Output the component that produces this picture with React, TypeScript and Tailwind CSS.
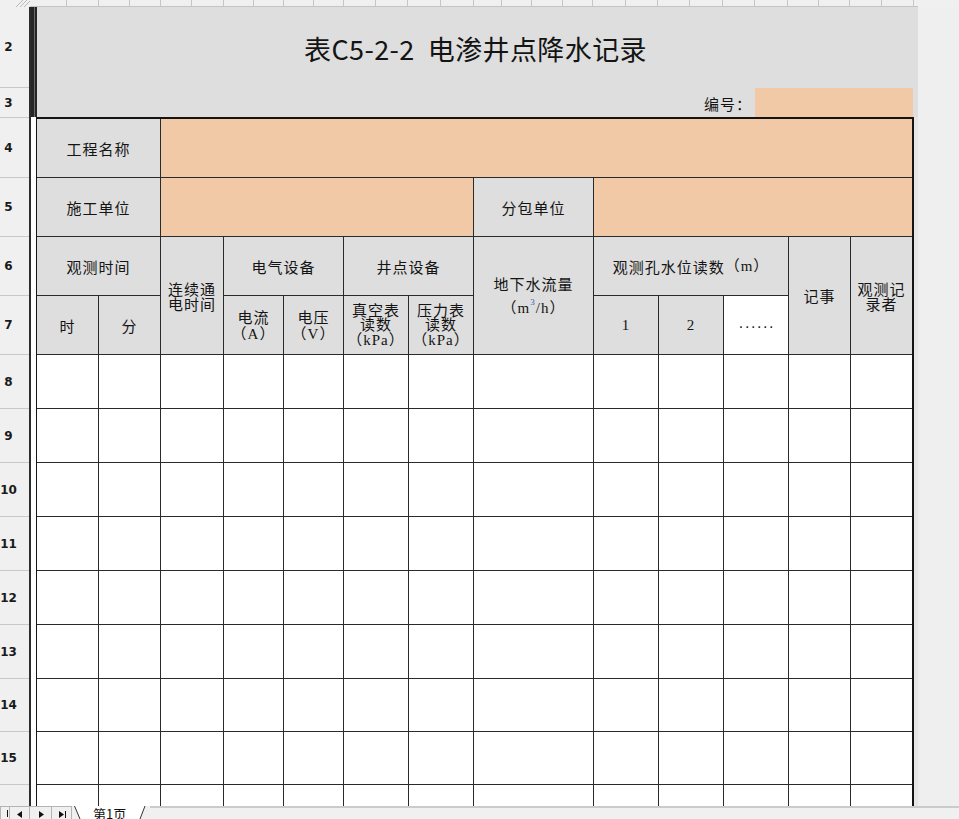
import React from "react";

const stripStops = [30, 67, 99, 130, 161, 192, 224, 254, 284, 314, 344, 376, 408, 441, 474, 502, 532, 563, 593, 626, 658, 690, 723, 755, 788, 819, 850, 882, 914, 918];

const rowHeads: { n: string; h: string }[] = [
  { n: "2", h: "h-[81px]" },
  { n: "3", h: "h-[30px]" },
  { n: "4", h: "h-[60px]" },
  { n: "5", h: "h-[59px]" },
  { n: "6", h: "h-[59px]" },
  { n: "7", h: "h-[59px]" },
  { n: "8", h: "h-[54px]" },
  { n: "9", h: "h-[54px]" },
  { n: "10", h: "h-[54px]" },
  { n: "11", h: "h-[54px]" },
  { n: "12", h: "h-[54px]" },
  { n: "13", h: "h-[54px]" },
  { n: "14", h: "h-[53px]" },
  { n: "15", h: "h-[53px]" },
  { n: "16", h: "h-[53px]" },
];

const G = "bg-[#dedede] flex items-center justify-center text-center text-[15px] leading-[15px] tracking-[1px] text-[#141414]";
const SERIF = "font-['Liberation_Serif','Noto_Sans_CJK_SC',serif]";

function Tri({ dir }: { dir: "l" | "r" }) {
  return (
    <svg width="6" height="7" viewBox="0 0 6 7">
      {dir === "l" ? <polygon points="5,0 5,7 0,3.5" fill="#111" /> : <polygon points="1,0 1,7 6,3.5" fill="#111" />}
    </svg>
  );
}

export default function App() {
  const dataRows = Array.from({ length: 9 });
  const cols = Array.from({ length: 13 });
  return (
    <div className="w-[959px] h-[819px] overflow-hidden bg-[#f0f0f0] flex flex-col font-['Noto_Sans_CJK_SC',sans-serif] text-[#141414]">
      {/* column header strip */}
      <div className="h-[7px] flex shrink-0">
        <div className="w-[30px] h-full bg-[#f0f0f0] flex justify-end">
          <svg width="16" height="7" viewBox="0 0 16 7">
            <line x1="2" y1="7" x2="9" y2="0" stroke="#b8b8b8" strokeWidth="1" />
            <line x1="6" y1="7" x2="13" y2="0" stroke="#b8b8b8" strokeWidth="1" />
            <line x1="10" y1="7" x2="16" y2="1" stroke="#b8b8b8" strokeWidth="1" />
          </svg>
        </div>
        <div className="flex h-full border-b border-[#c4c4c4]">
          {stripStops.slice(0, -1).map((s, i) => (
            <div
              key={i}
              className={i < stripStops.length - 2 ? "h-full bg-[#f0f0f0] border-r border-[#c6c6c6]" : "h-full bg-[#f0f0f0]"}
              style={{ width: stripStops[i + 1] - s }}
            />
          ))}
        </div>
      </div>

      {/* middle */}
      <div className="flex-1 flex min-h-0 overflow-hidden">
        {/* row headers */}
        <div className="w-[29px] shrink-0 flex flex-col bg-[#f0f0f0]">
          {rowHeads.map((r) => (
            <div key={r.n} className={`${r.h} shrink-0 border-b border-[#c8c8c8] flex items-center`}>
              <span className="w-[17px] text-center font-['DejaVu_Sans',sans-serif] font-bold text-[12px] text-[#1a1a1a]">{r.n}</span>
            </div>
          ))}
        </div>
        <div className="w-[2px] shrink-0 bg-[#2c2c2c]" />

        {/* sheet */}
        <div className="w-[887px] shrink-0 flex flex-col bg-white">
          {/* rows 2-3 */}
          <div className="h-[110px] shrink-0 flex">
            <div className="w-[6px] bg-[#262626] flex justify-center">
              <div className="w-px bg-[#6a6a6a]" />
            </div>
            <div className="flex-1 bg-[#dedede] flex flex-col">
              <div className="h-[81px] flex items-center justify-center pt-[2px] pr-[4px]">
                <span className="text-[27px] leading-none tracking-[0.4px] text-[#141414]">表C5-2-2</span>
                <span className="ml-[13px] text-[27px] leading-none tracking-[0.4px] text-[#141414]">电渗井点降水记录</span>
              </div>
              <div className="h-[29px] flex justify-end items-stretch pr-[5px]">
                <div className="flex items-center pr-[3px] pt-[3px] text-[15px] tracking-[1px]">编号：</div>
                <div className="w-[158px] bg-[#f2c9a6]" />
              </div>
            </div>
          </div>

          {/* table block */}
          <div className="flex-1 flex min-h-0">
            <div className="w-[5px] shrink-0 bg-white" />
            <div className="w-[878px] shrink-0 self-start border-l border-t-2 border-r-2 border-[#141414] bg-[#2a2a2a] grid gap-px grid-cols-[61px_61px_62px_59px_59px_64px_64px_119px_64px_64px_64px_61px_61px] grid-rows-[58px_58px_58px_58px_53px_53px_53px_53px_53px_53px_52px_52px_53px]">
              {/* row 4 */}
              <div className={`${G} col-span-2`}>工程名称</div>
              <div className="col-span-11 bg-[#f2c9a6]" />
              {/* row 5 */}
              <div className={`${G} col-span-2`}>施工单位</div>
              <div className="col-span-5 bg-[#f2c9a6]" />
              <div className={G}>分包单位</div>
              <div className="col-span-5 bg-[#f2c9a6]" />
              {/* row 6 */}
              <div className={`${G} col-span-2`}>观测时间</div>
              <div className={`${G} row-span-2`}>
                <div>连续通<br />电时间</div>
              </div>
              <div className={`${G} col-span-2`}>电气设备</div>
              <div className={`${G} col-span-2`}>井点设备</div>
              <div className={`${G} row-span-2`}>
                <div className="leading-[23px]">
                  地下水流量
                  <br />
                  <span className={`${SERIF} tracking-[1px]`}>
                    （m<span className="inline-block text-[9px] leading-none align-top mt-[3px] text-[#2f5fb8]">3</span>/h）
                  </span>
                </div>
              </div>
              <div className={`${G} col-span-3`}>
                观测孔水位读数<span className={SERIF}>（m）</span>
              </div>
              <div className={`${G} row-span-2`}>记事</div>
              <div className={`${G} row-span-2`}>
                <div>观测记<br />录者</div>
              </div>
              {/* row 7 */}
              <div className={G}>时</div>
              <div className={G}>分</div>
              <div className={G}>
                <div className="leading-[16px]">电流<br /><span className={SERIF}>（A）</span></div>
              </div>
              <div className={G}>
                <div className="leading-[16px]">电压<br /><span className={SERIF}>（V）</span></div>
              </div>
              <div className={G}>
                <div className="leading-[14.5px]">真空表<br />读数<br /><span className={SERIF}>（kPa）</span></div>
              </div>
              <div className={G}>
                <div className="leading-[14.5px]">压力表<br />读数<br /><span className={SERIF}>（kPa）</span></div>
              </div>
              <div className={`${G} ${SERIF}`}>1</div>
              <div className={`${G} ${SERIF}`}>2</div>
              <div className="bg-white flex items-center justify-center pb-[4px] pl-[2px] text-[14px] tracking-[1.6px] text-[#141414] font-['DejaVu_Sans',sans-serif]">......</div>
              {/* data rows */}
              {dataRows.map((_, r) =>
                cols.map((__, c) => <div key={`${r}-${c}`} className="bg-white" />)
              )}
            </div>
            <div className="w-[4px] shrink-0 bg-[#e6e6e6]" />
          </div>
        </div>
        <div className="flex-1 bg-[#efefef]" />
      </div>

      {/* bottom sheet tab bar */}
      <div className="h-[13px] shrink-0 flex bg-[#f0f0f0]">
        <div className="flex h-full">
          <div className="w-[10px] h-full border border-[#b4b4b4] border-b-0 bg-[#f0f0f0] flex items-end justify-end overflow-hidden pr-[1px]">
            <div className="w-px h-[7px] bg-[#111] mb-[2px]" />
          </div>
          <div className="w-[20px] h-full border-t border-r border-[#b4b4b4] flex items-center justify-center pt-[3px]">
            <Tri dir="l" />
          </div>
          <div className="w-[22px] h-full border-t border-r border-[#b4b4b4] flex items-center justify-center pt-[3px]">
            <Tri dir="r" />
          </div>
          <div className="w-[20px] h-full border-t border-r border-[#b4b4b4] flex items-center justify-center gap-[1px] pt-[3px]">
            <Tri dir="r" />
            <div className="w-px h-[7px] bg-[#111]" />
          </div>
        </div>
        <div className="relative w-[78px] h-full">
          <svg className="absolute inset-0" width="78" height="13" viewBox="0 0 78 13">
            <polygon points="2,0 73,0 68,13 8,13" fill="#ffffff" />
            <line x1="2.5" y1="0" x2="8" y2="13" stroke="#333" strokeWidth="1" />
            <line x1="73" y1="0" x2="68" y2="13" stroke="#333" strokeWidth="1" />
          </svg>
          <div className="relative pl-[21px] pt-[1px] text-[13px] leading-[13px] text-[#111] font-['Noto_Sans_CJK_SC',sans-serif]">
            第1页
          </div>
        </div>
        <div className="flex-1 h-full border-t-2 border-[#cbcbcb]" />
      </div>
    </div>
  );
}
